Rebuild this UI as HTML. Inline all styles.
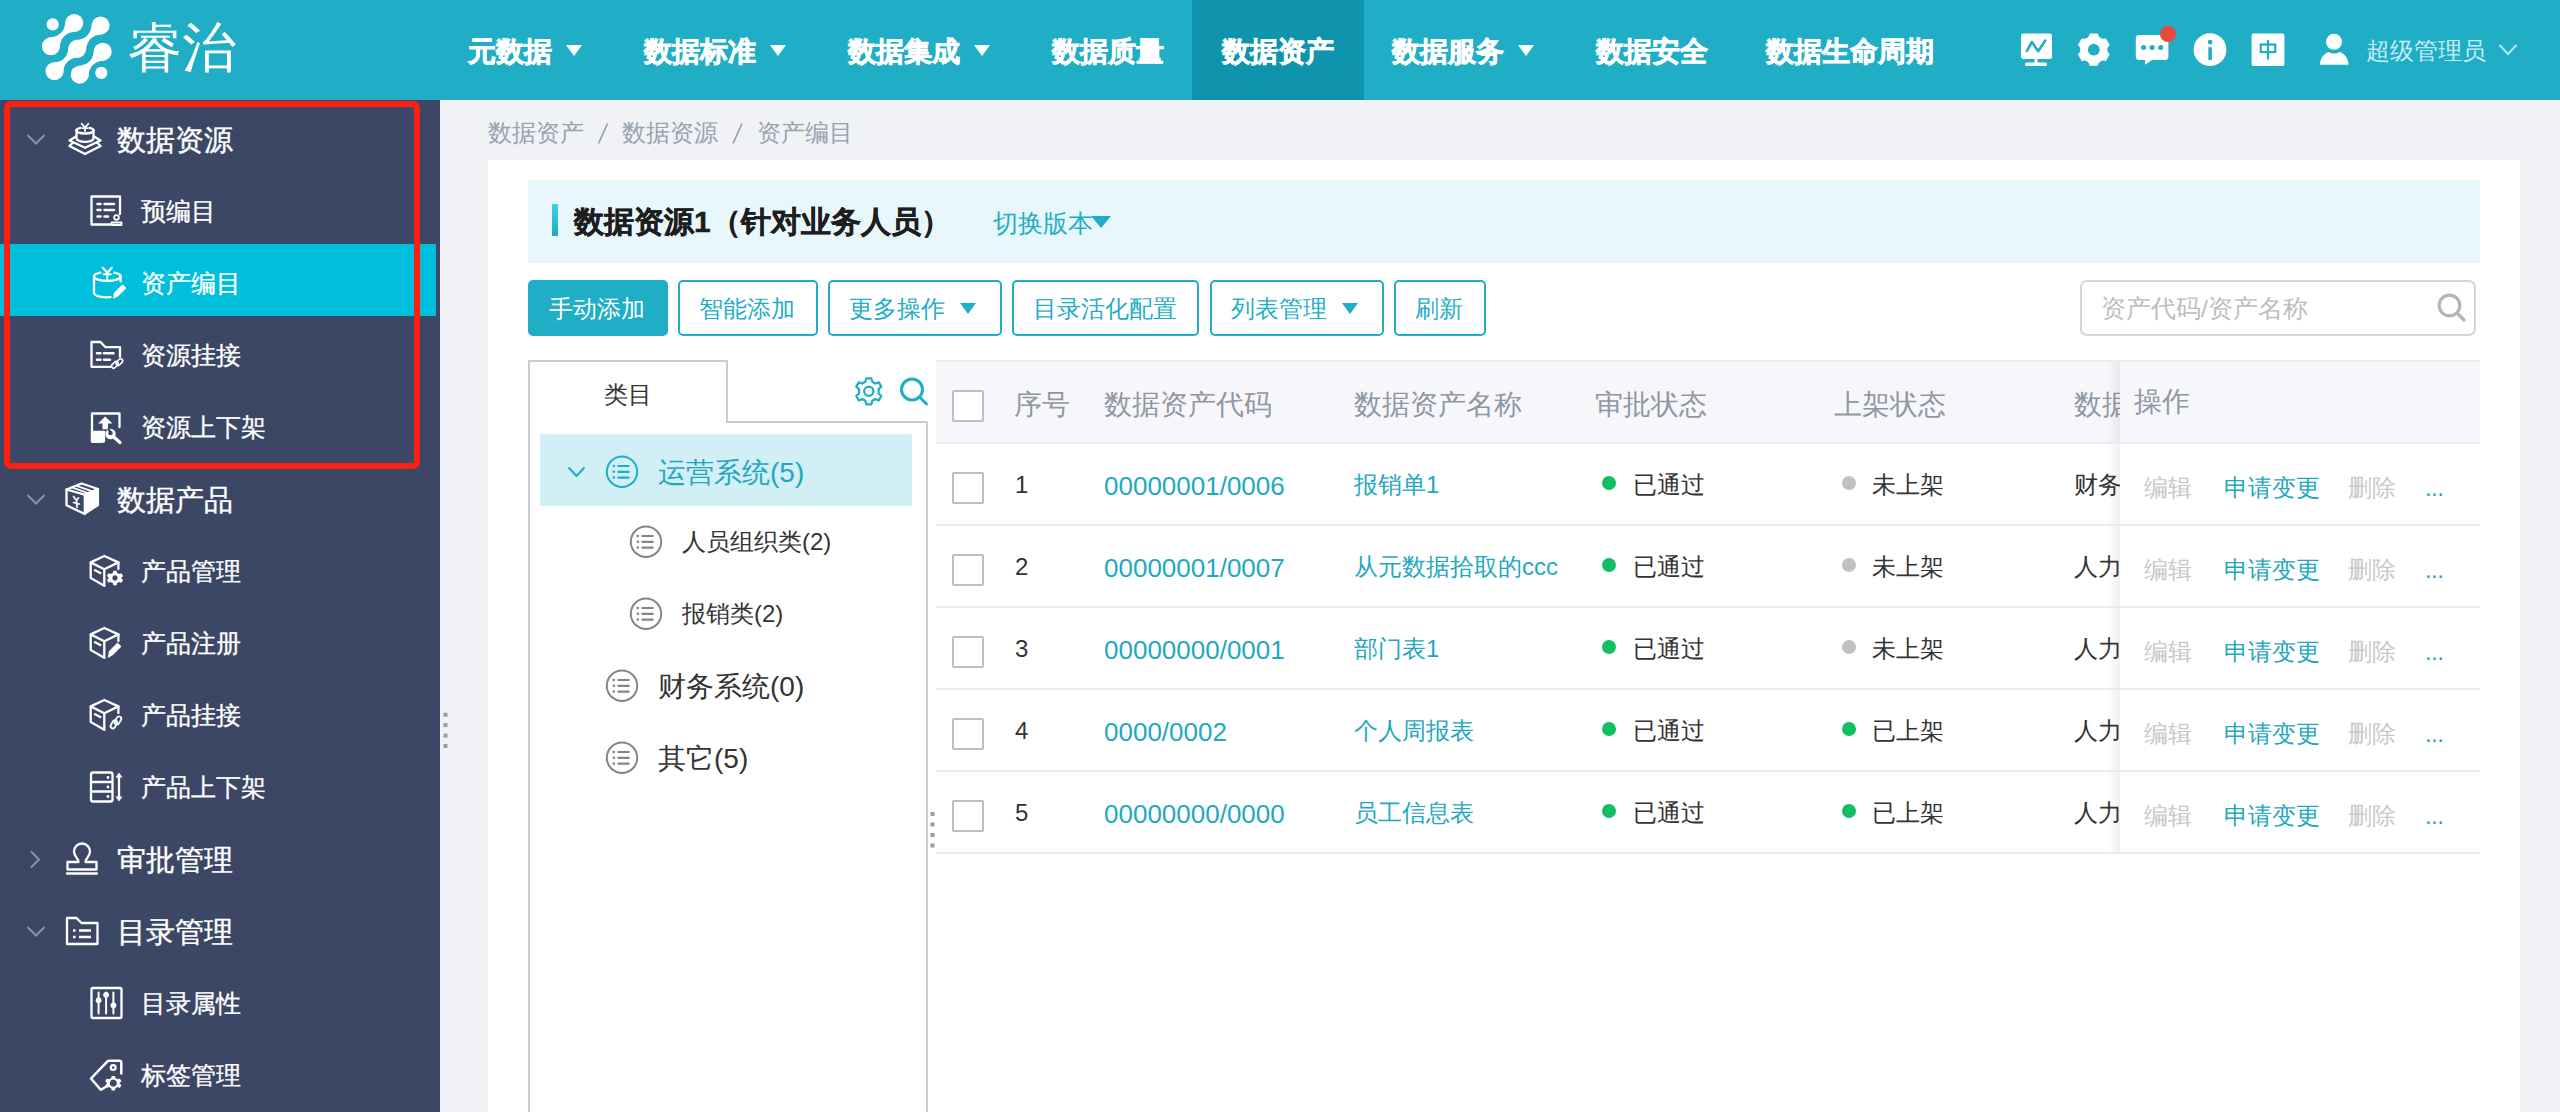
<!DOCTYPE html>
<html><head><meta charset="utf-8">
<style>
*{box-sizing:border-box;margin:0;padding:0}
html,body{width:2560px;height:1112px;overflow:hidden;background:#F0F2F5;font-family:"Liberation Sans",sans-serif;position:relative}
.a{position:absolute}
.t{position:absolute;white-space:nowrap;line-height:1}
.nav{position:absolute;top:38px;font-size:28px;font-weight:bold;color:#fff;line-height:1;white-space:nowrap;-webkit-text-stroke:0.7px #fff}
.tri{position:absolute;width:0;height:0;border-left:8px solid transparent;border-right:8px solid transparent;border-top:11px solid #fff}
.st{position:absolute;color:#fff;white-space:nowrap;line-height:1}
.s1{font-size:29px;left:117px;-webkit-text-stroke:0.35px #fff}
.s2{font-size:25px;left:140.5px;-webkit-text-stroke:0.3px #fff}
.btn{position:absolute;top:280px;height:56px;border:2px solid #1FAEC6;border-radius:5px;color:#1FAEC6;font-size:24px;line-height:54px;white-space:nowrap;background:#fff}
.th{position:absolute;top:391px;font-size:28px;color:#8E97A4;white-space:nowrap;line-height:1}
.cb{position:absolute;left:952px;width:32px;height:32px;border:2px solid #B9C0CC;border-radius:2px;background:#fff}
.td{position:absolute;font-size:24px;color:#333;white-space:nowrap;line-height:1}
.lk{color:#1FA8C0}
.code{font-size:26px}
.dot{position:absolute;width:14px;height:14px;border-radius:7px}
.op{position:absolute;font-size:24px;white-space:nowrap;line-height:1}
.hl{position:absolute;left:936px;width:1544px;height:2px;background:#E8ECF2}
</style></head><body>
<!-- header -->
<div class="a" style="left:0;top:0;width:2560px;height:100px;background:#1FAEC6"></div>
<div class="a" style="left:1192px;top:0;width:172px;height:100px;background:#0E95AD"></div>
<div class="t" style="left:128px;top:20px;font-size:54px;color:#fff">睿治</div>
<div class="nav" style="left:468px">元数据</div><div class="tri" style="left:566px;top:45px"></div>
<div class="nav" style="left:644px">数据标准</div><div class="tri" style="left:770px;top:45px"></div>
<div class="nav" style="left:848px">数据集成</div><div class="tri" style="left:974px;top:45px"></div>
<div class="nav" style="left:1052px">数据质量</div>
<div class="nav" style="left:1222px">数据资产</div>
<div class="nav" style="left:1392px">数据服务</div><div class="tri" style="left:1518px;top:45px"></div>
<div class="nav" style="left:1596px">数据安全</div>
<div class="nav" style="left:1766px">数据生命周期</div>
<div class="t" style="left:2366px;top:39px;font-size:24px;color:#C8EDF3">超级管理员</div>

<!-- sidebar -->
<div class="a" style="left:0;top:100px;width:440px;height:1012px;background:#3C4766"></div>
<div class="a" style="left:0;top:244px;width:436px;height:72px;background:#00BFDD"></div>
<div class="st s1" style="top:126px">数据资源</div>
<div class="st s2" style="top:199px">预编目</div>
<div class="st s2" style="top:271px">资产编目</div>
<div class="st s2" style="top:343px">资源挂接</div>
<div class="st s2" style="top:415px">资源上下架</div>
<div class="st s1" style="top:486px">数据产品</div>
<div class="st s2" style="top:559px">产品管理</div>
<div class="st s2" style="top:631px">产品注册</div>
<div class="st s2" style="top:703px">产品挂接</div>
<div class="st s2" style="top:775px">产品上下架</div>
<div class="st s1" style="top:846px">审批管理</div>
<div class="st s1" style="top:918px">目录管理</div>
<div class="st s2" style="top:991px">目录属性</div>
<div class="st s2" style="top:1063px">标签管理</div>
<div class="a" style="left:4px;top:101px;width:416px;height:368px;border:6px solid #FF1E10;border-radius:7px"></div>

<!-- breadcrumb -->
<div class="t" style="left:488px;top:121px;font-size:24px;color:#97A2B1">数据资产</div>
<div class="t" style="left:622px;top:121px;font-size:24px;color:#97A2B1">数据资源</div>
<div class="t" style="left:757px;top:121px;font-size:24px;color:#97A2B1">资产编目</div>
<svg class="a" style="left:590px;top:115px" width="160" height="35" viewBox="590 115 160 35"><path d="M598.5 143.5 L607.5 123.5 M733 143.5 L742 123.5" stroke="#97A2B1" stroke-width="1.8"/></svg>
<!-- card -->
<div class="a" style="left:488px;top:160px;width:2032px;height:952px;background:#fff"></div>
<div class="a" style="left:528px;top:180px;width:1952px;height:83px;background:#E8F7FC"></div>
<div class="a" style="left:552px;top:204px;width:6px;height:32px;background:linear-gradient(#3ED0EC,#1FA8C0)"></div>
<div class="t" style="left:574px;top:207px;font-size:30px;font-weight:bold;color:#1E1E1E;-webkit-text-stroke:0.4px #1E1E1E">数据资源1（针对业务人员）</div>
<div class="t" style="left:993px;top:212px;font-size:24.5px;color:#1FAEC6">切换版本</div>
<div class="tri" style="left:1091px;top:216px;border-top-color:#1FAEC6;border-left-width:10px;border-right-width:10px;border-top-width:12px"></div>

<!-- toolbar -->
<div class="btn" style="left:528px;width:140px;background:#1FAEC6;color:#fff;border-color:#1FAEC6;padding-left:19px">手动添加</div>
<div class="btn" style="left:678px;width:140px;padding-left:19px">智能添加</div>
<div class="btn" style="left:828px;width:174px;padding-left:19px">更多操作</div>
<div class="tri" style="left:960px;top:303px;border-top-color:#1FAEC6"></div>
<div class="btn" style="left:1012px;width:187px;padding-left:19px">目录活化配置</div>
<div class="btn" style="left:1210px;width:174px;padding-left:19px">列表管理</div>
<div class="tri" style="left:1342px;top:303px;border-top-color:#1FAEC6"></div>
<div class="btn" style="left:1394px;width:92px;padding-left:19px">刷新</div>
<div class="a" style="left:2080px;top:280px;width:396px;height:56px;border:2px solid #D6D6D6;border-radius:7px;background:#fff"></div>
<div class="t" style="left:2101px;top:297px;font-size:24.5px;color:#BDBDBD">资产代码/资产名称</div>

<!-- tree panel -->
<div class="a" style="left:528px;top:360px;width:2px;height:752px;background:#CACDD3"></div>
<div class="a" style="left:528px;top:360px;width:200px;height:2px;background:#CACDD3"></div>
<div class="a" style="left:726px;top:360px;width:2px;height:63px;background:#CACDD3"></div>
<div class="a" style="left:726px;top:421px;width:202px;height:2px;background:#CACDD3"></div>
<div class="a" style="left:926px;top:421px;width:2px;height:691px;background:#CACDD3"></div>
<div class="t" style="left:604px;top:383px;font-size:24px;color:#333">类目</div>
<div class="a" style="left:540px;top:434px;width:372px;height:72px;background:#D2EFF5"></div>
<div class="t" style="left:658px;top:459px;font-size:28px;color:#1FA8C0">运营系统(5)</div>
<div class="t" style="left:682px;top:530px;font-size:24px;color:#333">人员组织类(2)</div>
<div class="t" style="left:682px;top:602px;font-size:24px;color:#333">报销类(2)</div>
<div class="t" style="left:658px;top:673px;font-size:28px;color:#333">财务系统(0)</div>
<div class="t" style="left:658px;top:745px;font-size:28px;color:#333">其它(5)</div>

<!-- table -->
<div class="a" style="left:936px;top:360px;width:1544px;height:83px;background:#F7F7FB"></div>
<div class="cb" style="top:390px"></div>
<div class="th" style="left:1014px">序号</div>
<div class="th" style="left:1104px">数据资产代码</div>
<div class="th" style="left:1354px">数据资产名称</div>
<div class="th" style="left:1595px">审批状态</div>
<div class="th" style="left:1834px">上架状态</div>
<div class="th" style="left:2074px">数据</div>

<div class="cb" style="top:472px"></div>
<div class="td" style="left:1015px;top:473px">1</div>
<div class="td lk code" style="left:1104px;top:473px">00000001/0006</div>
<div class="td lk" style="left:1354px;top:473px">报销单1</div>
<div class="dot" style="left:1602px;top:476px;background:#12BE64"></div>
<div class="td" style="left:1633px;top:473px">已通过</div>
<div class="dot" style="left:1842px;top:476px;background:#C4BFC0"></div>
<div class="td" style="left:1872px;top:473px">未上架</div>
<div class="td" style="left:2074px;top:473px">财务</div>
<div class="cb" style="top:554px"></div>
<div class="td" style="left:1015px;top:555px">2</div>
<div class="td lk code" style="left:1104px;top:555px">00000001/0007</div>
<div class="td lk" style="left:1354px;top:555px">从元数据拾取的ccc</div>
<div class="dot" style="left:1602px;top:558px;background:#12BE64"></div>
<div class="td" style="left:1633px;top:555px">已通过</div>
<div class="dot" style="left:1842px;top:558px;background:#C4BFC0"></div>
<div class="td" style="left:1872px;top:555px">未上架</div>
<div class="td" style="left:2074px;top:555px">人力</div>
<div class="cb" style="top:636px"></div>
<div class="td" style="left:1015px;top:637px">3</div>
<div class="td lk code" style="left:1104px;top:637px">00000000/0001</div>
<div class="td lk" style="left:1354px;top:637px">部门表1</div>
<div class="dot" style="left:1602px;top:640px;background:#12BE64"></div>
<div class="td" style="left:1633px;top:637px">已通过</div>
<div class="dot" style="left:1842px;top:640px;background:#C4BFC0"></div>
<div class="td" style="left:1872px;top:637px">未上架</div>
<div class="td" style="left:2074px;top:637px">人力</div>
<div class="cb" style="top:718px"></div>
<div class="td" style="left:1015px;top:719px">4</div>
<div class="td lk code" style="left:1104px;top:719px">0000/0002</div>
<div class="td lk" style="left:1354px;top:719px">个人周报表</div>
<div class="dot" style="left:1602px;top:722px;background:#12BE64"></div>
<div class="td" style="left:1633px;top:719px">已通过</div>
<div class="dot" style="left:1842px;top:722px;background:#12BE64"></div>
<div class="td" style="left:1872px;top:719px">已上架</div>
<div class="td" style="left:2074px;top:719px">人力</div>
<div class="cb" style="top:800px"></div>
<div class="td" style="left:1015px;top:801px">5</div>
<div class="td lk code" style="left:1104px;top:801px">00000000/0000</div>
<div class="td lk" style="left:1354px;top:801px">员工信息表</div>
<div class="dot" style="left:1602px;top:804px;background:#12BE64"></div>
<div class="td" style="left:1633px;top:801px">已通过</div>
<div class="dot" style="left:1842px;top:804px;background:#12BE64"></div>
<div class="td" style="left:1872px;top:801px">已上架</div>
<div class="td" style="left:2074px;top:801px">人力</div>

<!-- fixed op column -->

<div class="a" style="left:2108px;top:360px;width:12px;height:493px;background:linear-gradient(to right,rgba(0,0,0,0),rgba(0,0,0,0.06))"></div>
<div class="a" style="left:2120px;top:360px;width:360px;height:83px;background:#F7F7FB"></div>
<div class="a" style="left:2120px;top:443px;width:360px;height:410px;background:#fff"></div>
<div class="hl" style="top:360px"></div>
<div class="hl" style="top:442px"></div>
<div class="hl" style="top:524px"></div>
<div class="hl" style="top:606px"></div>
<div class="hl" style="top:688px"></div>
<div class="hl" style="top:770px"></div>
<div class="hl" style="top:852px"></div>
<div class="th" style="left:2134px;top:388px">操作</div>
<div class="op" style="left:2144px;top:476px;color:#C8C8C8">编辑</div>
<div class="op" style="left:2224px;top:476px;color:#1FA8C0">申请变更</div>
<div class="op" style="left:2348px;top:476px;color:#C8C8C8">删除</div>
<div class="op" style="left:2425px;top:476px;color:#1FA8C0;letter-spacing:-0.6px">...</div>
<div class="op" style="left:2144px;top:558px;color:#C8C8C8">编辑</div>
<div class="op" style="left:2224px;top:558px;color:#1FA8C0">申请变更</div>
<div class="op" style="left:2348px;top:558px;color:#C8C8C8">删除</div>
<div class="op" style="left:2425px;top:558px;color:#1FA8C0;letter-spacing:-0.6px">...</div>
<div class="op" style="left:2144px;top:640px;color:#C8C8C8">编辑</div>
<div class="op" style="left:2224px;top:640px;color:#1FA8C0">申请变更</div>
<div class="op" style="left:2348px;top:640px;color:#C8C8C8">删除</div>
<div class="op" style="left:2425px;top:640px;color:#1FA8C0;letter-spacing:-0.6px">...</div>
<div class="op" style="left:2144px;top:722px;color:#C8C8C8">编辑</div>
<div class="op" style="left:2224px;top:722px;color:#1FA8C0">申请变更</div>
<div class="op" style="left:2348px;top:722px;color:#C8C8C8">删除</div>
<div class="op" style="left:2425px;top:722px;color:#1FA8C0;letter-spacing:-0.6px">...</div>
<div class="op" style="left:2144px;top:804px;color:#C8C8C8">编辑</div>
<div class="op" style="left:2224px;top:804px;color:#1FA8C0">申请变更</div>
<div class="op" style="left:2348px;top:804px;color:#C8C8C8">删除</div>
<div class="op" style="left:2425px;top:804px;color:#1FA8C0;letter-spacing:-0.6px">...</div>

<svg class="a" style="left:0;top:0" width="2560" height="1112" viewBox="0 0 2560 1112">
<!-- logo -->
<g fill="#fff"><circle cx="52.7" cy="24.4" r="6.1"/><circle cx="74.3" cy="22.9" r="9"/><circle cx="100.6" cy="25.5" r="9"/><circle cx="50.9" cy="46.3" r="9"/><circle cx="77.2" cy="48.8" r="9"/><circle cx="102.7" cy="51.7" r="9"/><circle cx="54.5" cy="71.2" r="9"/><circle cx="79.7" cy="74.7" r="9"/><circle cx="101.3" cy="72.9" r="6.1"/><path d="M65.61 20.57 Q64.79 36.79 48.57 37.61 L59.59 48.63 Q60.41 32.41 76.63 31.59 Z M91.91 23.15 Q91.08 39.34 74.89 40.10 L85.89 51.15 Q86.72 34.96 102.91 34.20 Z M68.52 46.41 Q68.02 62.20 52.23 62.49 L63.18 73.59 Q63.68 57.80 79.47 57.51 Z M94.01 49.37 Q93.39 65.39 77.37 66.01 L88.39 77.03 Q89.01 61.01 105.03 60.39 Z"/></g>
<!-- header icons -->
<g fill="#fff">
  <rect x="2021" y="33.5" width="31" height="25.5" rx="2"/>
  <rect x="2025" y="62.5" width="22" height="3.6" rx="1.5"/>
  <rect x="2034.5" y="58" width="3" height="6"/>
</g>
<path d="M2027 50.9 L2031.9 42 L2038.2 51.2 L2045.2 40.6" stroke="#1FAEC6" stroke-width="2.6" fill="none" stroke-linejoin="round" stroke-linecap="round"/>
<!-- gear -->
<path fill="#fff" fill-rule="evenodd" d="M2089.78 33.59 L2097.82 33.59 A5.49 5.49 0 0 0 2105.74 38.17 L2109.76 45.12 A5.49 5.49 0 0 0 2109.76 54.28 L2105.74 61.23 A5.49 5.49 0 0 0 2097.82 65.81 L2089.78 65.81 A5.49 5.49 0 0 0 2081.86 61.23 L2077.84 54.28 A5.49 5.49 0 0 0 2077.84 45.12 L2081.86 38.17 A5.49 5.49 0 0 0 2089.78 33.59 Z M2093.8 43.85 A5.85 5.85 0 1 0 2093.8100000000004 43.85 Z"/>
<!-- chat -->
<path fill="#fff" d="M2139 35 H2165 A3.3 3.3 0 0 1 2168.4 38.3 V56.6 A3.3 3.3 0 0 1 2165 60 H2152 L2145.1 64.8 V60 H2139 A3.3 3.3 0 0 1 2135.8 56.6 V38.3 A3.3 3.3 0 0 1 2139 35 Z"/>
<g fill="#1FAEC6"><circle cx="2143.5" cy="47.6" r="2.5"/><circle cx="2152.1" cy="47.6" r="2.5"/><circle cx="2160.7" cy="47.6" r="2.5"/></g>
<circle cx="2168" cy="34" r="8" fill="#E84A3F"/>
<!-- info -->
<circle cx="2210" cy="49.7" r="16.4" fill="#fff"/>
<rect x="2208.3" y="47.2" width="3.6" height="12.7" fill="#1FAEC6"/>
<circle cx="2210.1" cy="42.1" r="2.4" fill="#1FAEC6"/>
<!-- zh -->
<rect x="2251.6" y="33.4" width="32.8" height="32.7" rx="2" fill="#fff"/>
<g fill="none" stroke="#1FAEC6" stroke-width="2.2">
  <rect x="2260.8" y="44.5" width="14.4" height="7.6"/>
  <path d="M2268 40 V59.5"/>
</g>
<!-- person -->
<circle cx="2334" cy="41.8" r="8" fill="#fff"/>
<path d="M2320 64.8 C2320 58 2324 53.5 2328.5 52 C2332 54 2336 54 2339.5 52 C2344.5 53.5 2348.5 58 2348.5 64.8 Z" fill="#fff"/>
<path d="M2499.5 45 L2508 54 L2516.5 45" stroke="#B8E6EE" stroke-width="2.2" fill="none"/>
</svg>

<svg class="a" style="left:0;top:0" width="2560" height="1112" viewBox="0 0 2560 1112">
<g stroke="#fff" fill="none" stroke-width="2.3" stroke-linejoin="round" stroke-linecap="round">
<!-- 数据资源 icon -->
<path d="M76.5 130.5 V138.5 A8.5 3.3 0 0 0 93.5 138.5 V130.5"/>
<path d="M76.5 130.5 A8.5 3 0 0 0 93.5 130.5"/>
<path d="M76.5 130.5 A8.5 3 0 0 1 80.5 127.8 M89.5 127.8 A8.5 3 0 0 1 93.5 130.5"/>
<path d="M81.8 123.8 L85 127.5 L88.2 123.8 M85 127.5 V131 M82.5 128.2 H87.5" stroke-width="1.8"/>
<path d="M76 136.5 L69.5 140.5 L85 147.8 L100.5 140.5 L94 136.5"/>
<path d="M73 142.5 L69.5 146 L85 154 L100.5 146 L97 142.5"/>
<!-- 预编目 -->
<path d="M110 224.5 H91.5 V196.5 H120 V214"/>
<path d="M97.5 204 H100.5 M104.5 204 H114 M97.5 210 H100.5 M104.5 210 H114 M97.5 216.5 H100.5 M104.5 216.5 H108" stroke-width="2.5"/>
<circle cx="116.5" cy="217.5" r="2.3" stroke-width="1.8"/>
<path d="M111.5 225 V222.5 H121.5 V225 Z" stroke-width="1.8"/>
<!-- 资产编目 -->
<path d="M94 276.5 A13.3 4.3 0 0 0 120.6 276.5"/>
<path d="M94 276.5 A13.3 4.3 0 0 1 100.5 272.6 M114.2 272.6 A13.3 4.3 0 0 1 120.6 276.5"/>
<path d="M94 276.5 V292.8 A13.3 4.3 0 0 0 110.5 297.2"/>
<path d="M120.6 276.5 V281.5"/>
<path d="M102.8 267.8 L107.3 272.8 L111.8 267.8 M107.3 272.8 V279.5 M103.8 274.2 H110.8" stroke-width="2.1"/>
<path d="M113.8 298 L114.6 293.2 L122.6 285.2 L125.4 288 L117.4 296 Z" fill="#fff" stroke-width="1.4"/>
<!-- 资源挂接 -->
<path d="M110.6 366.8 H91.5 V342 H100.5 L105.5 347.2 H120 V356.7"/>
<path d="M97 353.2 H100.5 M104 353.2 H113.5 M97 359.7 H100.5 M104 359.7 H110" stroke-width="2.5"/>
<rect x="-3.8" y="-2.1" width="7.6" height="4.2" rx="2.1" transform="translate(119.41 362.12) rotate(-46)" stroke-width="1.6"/><rect x="-3.8" y="-2.1" width="7.6" height="4.2" rx="2.1" transform="translate(114.79 364.88) rotate(-46)" stroke-width="1.6"/>
<!-- 资源上下架 -->
<path d="M101 441.5 H92 V413.5 H119.5 V427"/>
<path d="M92 432 H104 V441.5 H92 Z" fill="#fff"/>
</g>
<g fill="#fff">
<path d="M105.2 416.5 L98 423.5 H102.5 V429.2 H108 V423.5 H112.5 Z"/>
<circle cx="110.5" cy="434" r="5.2"/>
<path d="M111 434.5 L120 442.5" stroke="#fff" stroke-width="3.3" stroke-linecap="round"/>
</g>
<circle cx="110.5" cy="433" r="2.3" fill="#3C4766"/>
<path d="M108 428.5 L110.5 432" stroke="#3C4766" stroke-width="2.3"/>

<g stroke="#fff" fill="none" stroke-width="2.3" stroke-linejoin="round" stroke-linecap="round">
<!-- 数据产品 -->
<path d="M66.5 489.5 L81.6 483.5 L98 489 L84.5 494.7 Z"/>
<path d="M66.5 489.5 V505.3 L84.8 514 V494.7"/>
<path d="M72 487.3 L87.5 493 M76 485.6 L91.5 491.2" stroke-width="1.8"/>
<path d="M73.5 496.5 L76.5 500.5 L78.5 497.8 M76.5 500.5 L77 507.5 M73.5 502.5 L79.5 504" stroke-width="1.7"/>
</g>
<path d="M84.8 494.7 L98.3 489 V505.3 L84.8 514 Z" fill="#fff" stroke="#fff" stroke-width="1.5" stroke-linejoin="round"/>

<!-- cube template for 产品管理/注册/挂接 -->
<g id="cube1" stroke="#fff" fill="none" stroke-width="2.3" stroke-linejoin="round" stroke-linecap="round">
<path d="M104.3 585.8 L90.7 578 V562.4 L104.3 556 L118.4 562.4 V569"/>
<path d="M90.7 562.4 L104.3 569.3 L118.4 562.4 M104.3 569.3 V585.8"/>
<path d="M95 570.2 L100.3 573" stroke-width="2.4"/>
</g>
<g transform="translate(115 578)" fill="#fff">
<path fill-rule="evenodd" d="M-1.6 -7.2 H1.6 L2.2 -5 L4.3 -3.9 L6.5 -4.7 L8.1 -2 L6.3 -0.3 V0.3 L8.1 2 L6.5 4.7 L4.3 3.9 L2.2 5 L1.6 7.2 H-1.6 L-2.2 5 L-4.3 3.9 L-6.5 4.7 L-8.1 2 L-6.3 0.3 V-0.3 L-8.1 -2 L-6.5 -4.7 L-4.3 -3.9 L-2.2 -5 Z M0 -2.7 A2.7 2.7 0 1 0 0.01 -2.7 Z"/>
</g>
<use href="#cube1" transform="translate(0 72)"/>
<path d="M108.5 657 L109.5 651.5 L117.5 643.5 L120.5 646.5 L112.5 654.5 Z" fill="#fff" stroke="#fff" stroke-width="1.3" stroke-linejoin="round"/>
<use href="#cube1" transform="translate(0 144)"/>
<g stroke="#fff" fill="none"><rect x="-4.3" y="-2.3" width="8.6" height="4.6" rx="2.3" transform="translate(117.94 720.51) rotate(-60)" stroke-width="1.8"/><rect x="-4.3" y="-2.3" width="8.6" height="4.6" rx="2.3" transform="translate(113.86 724.39) rotate(-60)" stroke-width="1.8"/></g>
<!-- 产品上下架 -->
<g stroke="#fff" fill="none" stroke-width="2.3" stroke-linejoin="round">
<rect x="91" y="772.5" width="21.5" height="29" rx="2"/>
<path d="M91 782 H112.5 M91 791.5 H112.5"/>
<path d="M119 775 V799"/>
</g>
<g fill="#fff"><circle cx="108" cy="777.5" r="1.4"/><circle cx="108" cy="787" r="1.4"/><circle cx="108" cy="796.5" r="1.4"/>
<path d="M115.5 777.5 L119 772.5 L122.5 777.5 Z M115.5 796.5 L119 801.5 L122.5 796.5 Z"/></g>
<!-- 审批管理 stamp -->
<g stroke="#fff" fill="none" stroke-width="2.3" stroke-linejoin="round" stroke-linecap="round">
<path d="M78.5 862 C78.5 858 74 856.5 74 851.5 A8 8 0 0 1 90 851.5 C90 856.5 85.5 858 85.5 862 H96.5 V869.5 H67.5 V862 Z"/>
<path d="M67 873.5 H97"/>
<!-- 目录管理 folder -->
<path d="M67 944 V918 H76.5 L81.5 923 H97.5 V944 Z"/>
<path d="M73 930.5 H75.5 M79 930.5 H91 M73 937 H75.5 M79 937 H91" stroke-width="2.3" stroke-linecap="butt"/>
<!-- 目录属性 -->
<rect x="91.5" y="988" width="30" height="30" rx="1.5"/>
<path d="M98.6 992.5 V1013.5 M106.1 992.5 V1013.5 M113.4 992.5 V1013.5" stroke-width="2"/>
</g>
<g fill="#fff"><circle cx="98.6" cy="1000.3" r="2.9"/><circle cx="106.1" cy="994.8" r="2.9"/><circle cx="113.4" cy="1005.3" r="2.9"/></g>
<!-- 标签管理 tag -->
<g stroke="#fff" fill="none" stroke-width="2.3" stroke-linejoin="round" stroke-linecap="round">
<path d="M105.5 1087 L100.7 1089.8 L91 1078.5 L107 1061.8 A2.5 2.5 0 0 1 109 1060.8 H119.3 A2 2 0 0 1 121.3 1062.8 V1073.5" stroke-width="2.5"/>
<circle cx="113.2" cy="1067.5" r="2.4"/>
</g>
<g transform="translate(113.3 1083.2)" fill="#fff">
<path fill-rule="evenodd" d="M-1.6 -7.2 H1.6 L2.2 -5 L4.3 -3.9 L6.5 -4.7 L8.1 -2 L6.3 -0.3 V0.3 L8.1 2 L6.5 4.7 L4.3 3.9 L2.2 5 L1.6 7.2 H-1.6 L-2.2 5 L-4.3 3.9 L-6.5 4.7 L-8.1 2 L-6.3 0.3 V-0.3 L-8.1 -2 L-6.5 -4.7 L-4.3 -3.9 L-2.2 -5 Z M0 -3.6 A3.6 3.6 0 1 0 0.01 -3.6 Z"/>
</g>
<!-- sidebar chevrons -->
<g stroke="#8A93A6" fill="none" stroke-width="2">
<path d="M27.5 135 L36 143.5 L44.5 135"/>
<path d="M27.5 495 L36 503.5 L44.5 495"/>
<path d="M31 851.5 L39 859.5 L31 867.5"/>
<path d="M27.5 927 L36 935.5 L44.5 927"/>
</g>
<!-- resize dots -->
<g fill="#9A9A9A">
<rect x="443.5" y="712.7" width="4" height="4"/><rect x="443.5" y="723.1" width="4" height="4"/><rect x="443.5" y="733.6" width="4" height="4"/><rect x="443.5" y="744" width="4" height="4"/>
<rect x="930.5" y="812" width="4" height="4"/><rect x="930.5" y="822.5" width="4" height="4"/><rect x="930.5" y="833" width="4" height="4"/><rect x="930.5" y="843.5" width="4" height="4"/>
</g>
<!-- search input icon -->
<g stroke="#B5B5B5" fill="none" stroke-width="3.2" stroke-linecap="round">
<circle cx="2449.5" cy="305.5" r="10.3"/><path d="M2457 313 L2464 320"/>
</g>
<!-- tree toolbar icons -->
<g transform="translate(868.8 391.3)" fill="none" stroke="#1FAEC6" stroke-width="2.3" stroke-linejoin="round">
<path d="M-2.5 -13 H2.5 L3.5 -9.5 L6.5 -7.8 L10 -9 L12.5 -4.7 L9.8 -2.2 V2.2 L12.5 4.7 L10 9 L6.5 7.8 L3.5 9.5 L2.5 13 H-2.5 L-3.5 9.5 L-6.5 7.8 L-10 9 L-12.5 4.7 L-9.8 2.2 V-2.2 L-12.5 -4.7 L-10 -9 L-6.5 -7.8 L-3.5 -9.5 Z"/>
<circle r="4.6"/>
</g>
<g stroke="#1FAEC6" fill="none" stroke-width="3" stroke-linecap="round">
<circle cx="912" cy="389.5" r="10.5"/><path d="M920 397.5 L926.5 404"/>
</g>
<!-- tree chevron -->
<path d="M568.5 467.5 L576.5 476 L584.5 467.5" stroke="#1FAEC6" stroke-width="2.2" fill="none"/>
<!-- tree list icons -->
<g id="li1" fill="none" stroke="#1FAEC6" stroke-width="2">
<circle cx="622" cy="471.8" r="15.2"/>
<path d="M617.5 466 H629.5 M617.5 471.8 H629.5 M617.5 477.6 H629.5" stroke-width="2.2"/>
</g>
<g fill="#1FAEC6"><circle cx="613.8" cy="466" r="1.3"/><circle cx="613.8" cy="471.8" r="1.3"/><circle cx="613.8" cy="477.6" r="1.3"/></g>
<g id="li2" fill="none" stroke="#858585" stroke-width="2">
<circle cx="646" cy="541.8" r="15.2"/>
<path d="M641.5 536 H653.5 M641.5 541.8 H653.5 M641.5 547.6 H653.5" stroke-width="2.2"/>
</g>
<g id="li2d" fill="#858585"><circle cx="637.8" cy="536" r="1.3"/><circle cx="637.8" cy="541.8" r="1.3"/><circle cx="637.8" cy="547.6" r="1.3"/></g>
<use href="#li2" transform="translate(0 72)"/><use href="#li2d" transform="translate(0 72)"/>
<use href="#li2" transform="translate(-24 144)"/><use href="#li2d" transform="translate(-24 144)"/>
<use href="#li2" transform="translate(-24 216)"/><use href="#li2d" transform="translate(-24 216)"/>
</svg>

</body></html>
